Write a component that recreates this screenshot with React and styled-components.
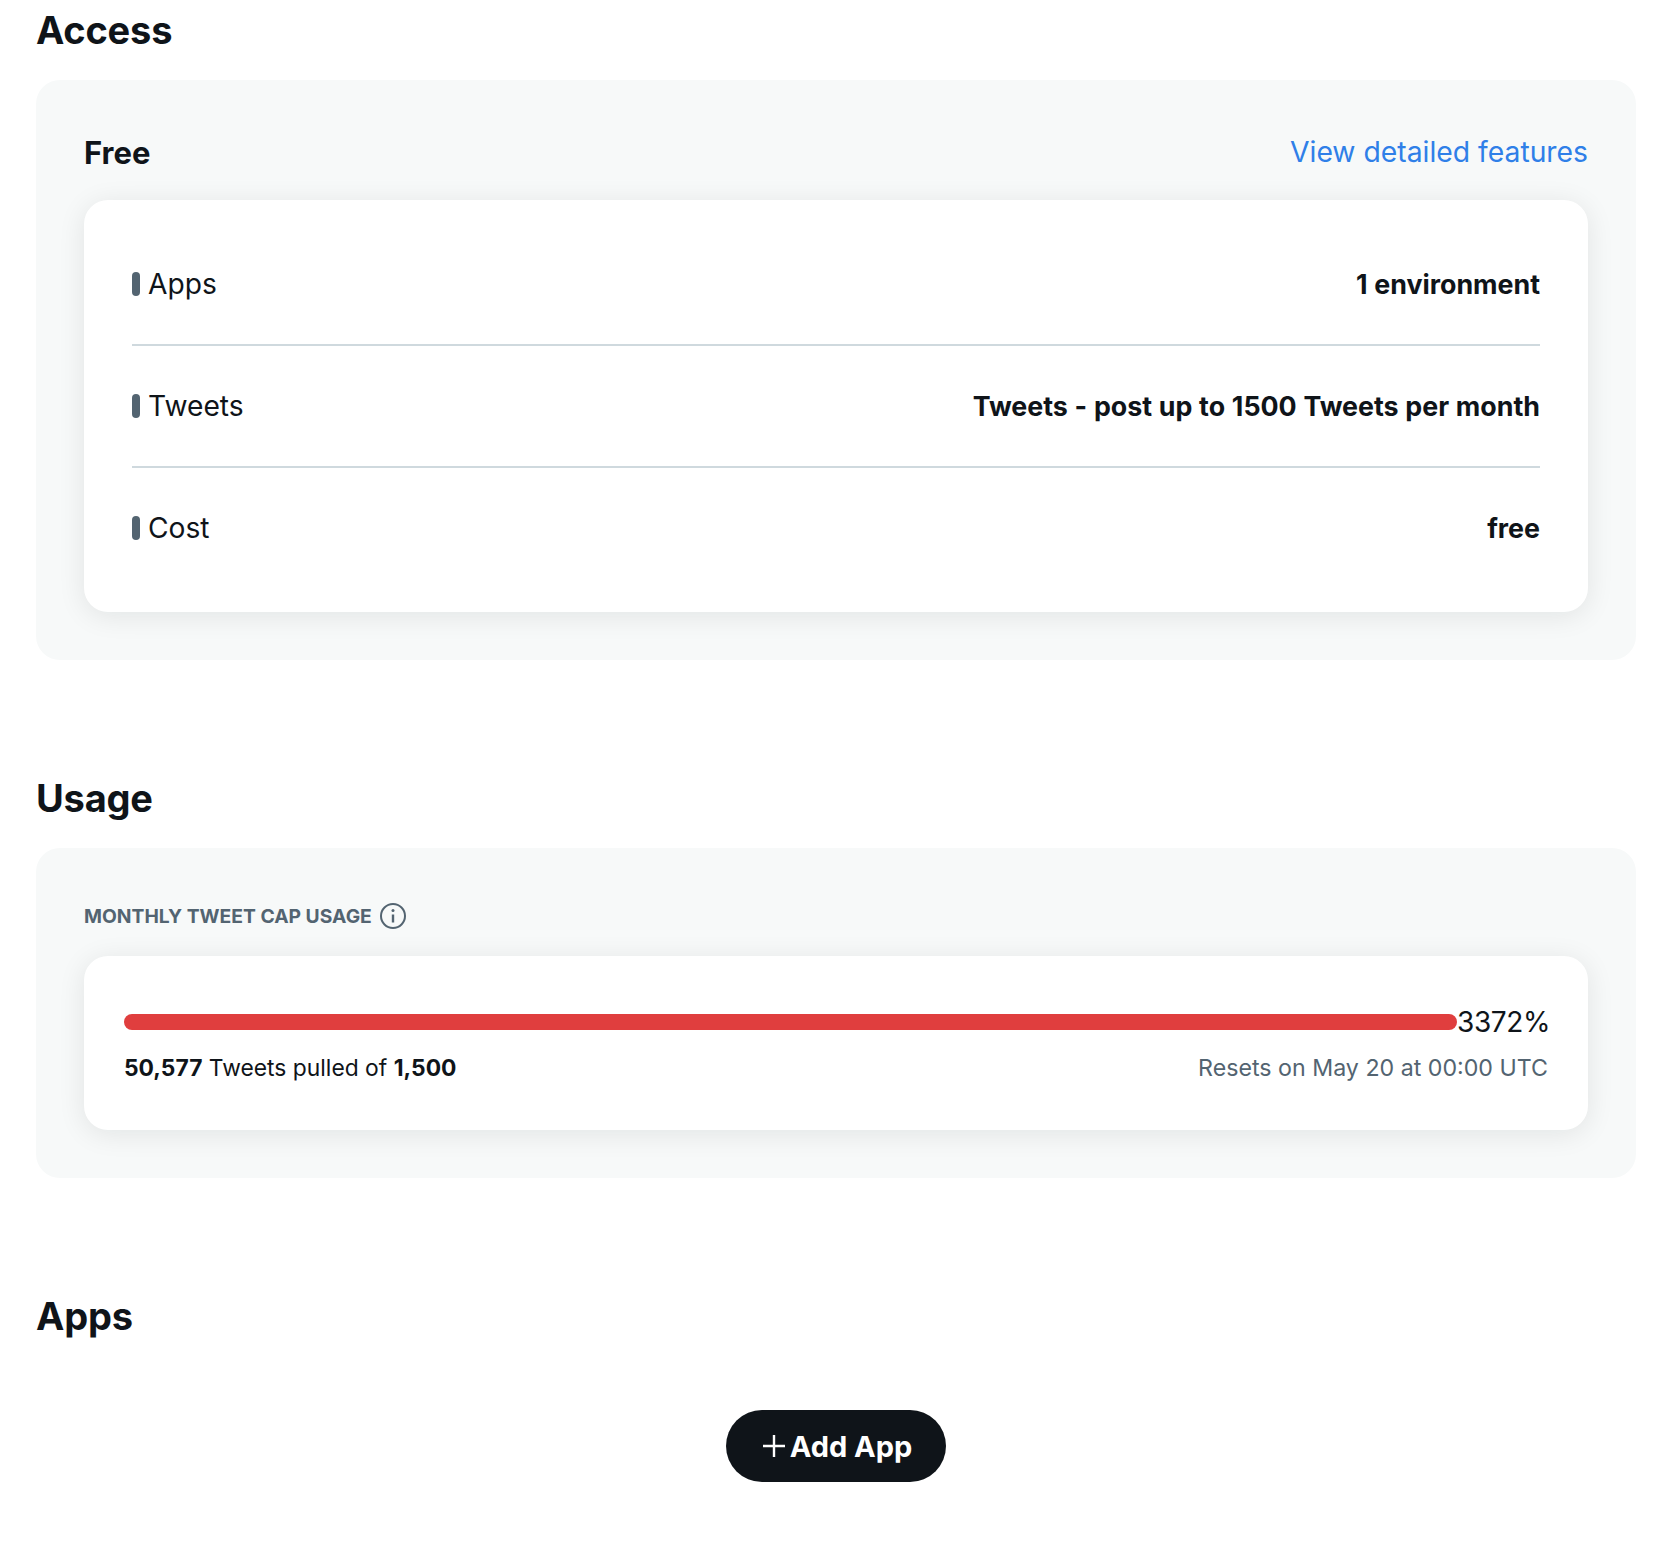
import React from 'react';
import styled, { createGlobalStyle } from 'styled-components';

const INK = '#0f1419';
const SLATE = '#536471';

const GlobalStyle = createGlobalStyle`
  html, body {
    margin: 0;
    padding: 0;
    background: #fff;
  }
  body {
    font-family: Inter, 'Liberation Sans', sans-serif;
    color: ${INK};
  }
`;

const Page = styled.div`
  padding: 0 34px 64px 36px;
  height: 1546px;
  box-sizing: border-box;
  overflow: hidden;
`;

const Section = styled.section`
  margin-bottom: ${(props) => props.$gap}px;
`;

const Heading = styled.h2`
  margin: 0 0 ${(props) => props.$below || 20}px;
  font-size: 38px;
  line-height: 60px;
  font-weight: 700;
  letter-spacing: -0.2px;
`;

const Panel = styled.div`
  background: #f7f9f9;
  border-radius: 24px;
  padding: ${(props) => props.$top}px 48px 48px;
`;

const PanelHeader = styled.div`
  display: flex;
  justify-content: space-between;
  align-items: center;
  height: 48px;
  margin-bottom: 24px;
`;

const PlanName = styled.div`
  font-size: 31px;
  font-weight: 700;
`;

const DetailLink = styled.a`
  font-size: 28.3px;
  line-height: 50px;
  color: #2f7fe8;
  text-decoration: none;
`;

const Card = styled.div`
  background: #fff;
  border-radius: 24px;
  box-shadow: 0 4px 28px rgba(15, 20, 25, 0.09);
  padding: ${(props) => props.$pad};
`;

const Row = styled.div`
  display: flex;
  justify-content: space-between;
  align-items: center;
  height: 120px;
  border-bottom: ${(props) => (props.$last ? 'none' : '2px solid #cfd9de')};
`;

const RowLabel = styled.div`
  display: flex;
  align-items: center;
  gap: 8px;
  font-size: 28.2px;
  line-height: 36px;
`;

const Bullet = styled.span`
  width: 8px;
  height: 24px;
  border-radius: 4px;
  background: ${SLATE};
`;

const RowValue = styled.div`
  font-size: 26.8px;
  line-height: 36px;
  font-weight: 700;
  word-spacing: 0.4px;
`;

const CapLabel = styled.div`
  display: flex;
  align-items: center;
  gap: 7px;
  height: 36px;
  margin-bottom: 22px;
  font-size: 19.3px;
  font-weight: 700;
  color: ${SLATE};
`;

const BarLine = styled.div`
  display: flex;
  align-items: center;
`;

const BarFill = styled.div`
  flex: 1;
  height: 16px;
  border-radius: 8px;
  background: #e03e3e;
`;

const Percent = styled.span`
  font-size: 28px;
  line-height: 36px;
  letter-spacing: -0.4px;
  margin-right: -2px;
`;

const UsageFoot = styled.div`
  display: flex;
  justify-content: space-between;
  align-items: center;
  margin-top: 10px;
  font-size: 22.85px;
  line-height: 36px;
`;

const Resets = styled.span`
  font-size: 23.2px;
  color: ${SLATE};
`;

const ButtonRow = styled.div`
  display: flex;
  justify-content: center;
`;

const AddButton = styled.button`
  display: flex;
  align-items: center;
  justify-content: center;
  gap: 4px;
  width: 220px;
  height: 72px;
  padding: 0 0 0 2px;
  border: none;
  border-radius: 36px;
  background: ${INK};
  color: #fff;
  font-family: inherit;
  font-size: 29px;
  font-weight: 700;
`;

const rows = [
  { label: 'Apps', value: '1 environment' },
  { label: 'Tweets', value: 'Tweets - post up to 1500 Tweets per month' },
  { label: 'Cost', value: 'free' },
];

const InfoIcon = () => (
  <svg width="28" height="28" viewBox="0 0 28 28" fill="none" stroke={SLATE} strokeWidth="2">
    <circle cx="14" cy="14" r="12" />
    <path d="M14 12.5v8" strokeWidth="2.4" />
    <circle cx="14" cy="8.6" r="1.5" fill={SLATE} stroke="none" />
  </svg>
);

const PlusIcon = () => (
  <svg width="24" height="24" viewBox="0 0 24 24" stroke="#fff" strokeWidth="2.4">
    <path d="M12 1v22M1 12h22" />
  </svg>
);

export default function App() {
  return (
    <Page>
      <GlobalStyle />
      <Section $gap={108}>
        <Heading>Access</Heading>
        <Panel $top={48}>
          <PanelHeader>
            <PlanName>Free</PlanName>
            <DetailLink href="#">View detailed features</DetailLink>
          </PanelHeader>
          <Card $pad="24px 48px">
            {rows.map((row, i) => (
              <Row key={row.label} $last={i === rows.length - 1}>
                <RowLabel>
                  <Bullet />
                  {row.label}
                </RowLabel>
                <RowValue>{row.value}</RowValue>
              </Row>
            ))}
          </Card>
        </Panel>
      </Section>
      <Section $gap={108}>
        <Heading>Usage</Heading>
        <Panel $top={50}>
          <CapLabel>
            MONTHLY TWEET CAP USAGE
            <InfoIcon />
          </CapLabel>
          <Card $pad="48px 40px 44px">
            <BarLine>
              <BarFill />
              <Percent>3372%</Percent>
            </BarLine>
            <UsageFoot>
              <span>
                <b>50,577</b> Tweets pulled of <b>1,500</b>
              </span>
              <Resets>Resets on May 20 at 00:00 UTC</Resets>
            </UsageFoot>
          </Card>
        </Panel>
      </Section>
      <Section $gap={0}>
        <Heading $below={64}>Apps</Heading>
        <ButtonRow>
          <AddButton>
            <PlusIcon />
            Add App
          </AddButton>
        </ButtonRow>
      </Section>
    </Page>
  );
}
